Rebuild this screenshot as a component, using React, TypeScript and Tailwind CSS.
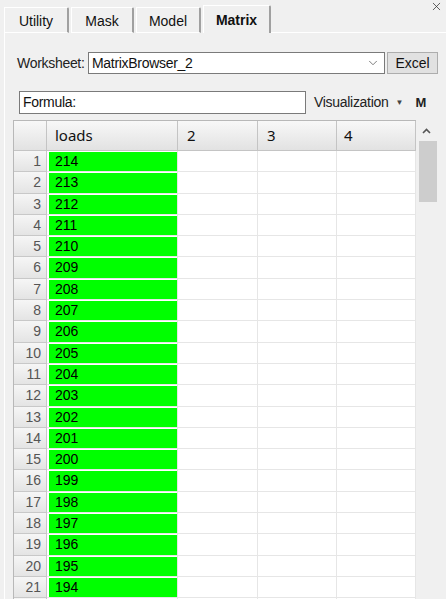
import { ChevronDown, X } from 'lucide-react'

const loads = [214, 213, 212, 211, 210, 209, 208, 207, 206, 205, 204, 203, 202, 201, 200, 199, 198, 197, 196, 195, 194]

function Tab({ label, w, active }: { label: string; w: string; active?: boolean }) {
  return (
    <div
      className={`${w} ${active ? 'h-[28px] font-bold bg-[#f0f0f0] border-b-0' : 'h-[26px] border-b border-b-[#ffffff]'} flex items-center justify-center pt-[2px] border-l border-t border-l-[#ffffff] border-t-[#ffffff] border-r-2 border-r-[#a0a0a0] rounded-tr-[2px] text-[14px] text-[#111]`}>
      {label}
    </div>
  )
}

function App() {
  return (
    <div
      className="w-[446px] h-[599px] bg-[#f0f0f0] overflow-hidden relative text-[13px] text-[#111]"
      style={{ fontFamily: '"Liberation Sans", Arial, sans-serif' }}>
      <X className="absolute right-[3px] top-[0px] w-[13px] h-[13px] text-[#333]" strokeWidth={1.4} />

      {/* tabs */}
      <div className="flex items-end h-[33px] pl-[4px]">
        <div className="flex items-end gap-[2px]">
          <Tab label="Utility" w="w-[65px]" />
          <Tab label="Mask" w="w-[63px]" />
          <Tab label="Model" w="w-[65px]" />
          <Tab label="Matrix" w="w-[68px]" active />
        </div>
        <div className="flex-1 h-[1px] bg-[#ffffff] mb-0" />
      </div>

      <div className="ml-[4px] border-l border-[#ffffff] h-[566px] flex flex-col">
        {/* worksheet row */}
        <div className="flex items-center mt-[19px] h-[22px]">
          <span className="ml-[12px] w-[70px] text-[14px] text-[#222] tracking-[-0.3px]">Worksheet:</span>
          <div className="ml-[1px] w-[297px] h-[22px] bg-white border border-[#7a7a7a] flex items-center pl-[3px] pr-[4px]">
            <span className="flex-1 text-[14px] tracking-[-0.3px]">MatrixBrowser_2</span>
            <ChevronDown className="w-[14px] h-[14px] text-[#555]" strokeWidth={1.3} />
          </div>
          <div className="ml-[2px] w-[51px] h-[22px] bg-[#e1e1e1] border border-[#adadad] flex items-center justify-center text-[14px]">
            Excel
          </div>
        </div>

        {/* formula row */}
        <div className="flex items-center mt-[17px] h-[23px]">
          <div className="ml-[14px] w-[287px] h-[23px] bg-white border border-[#7a7a7a] flex items-center pl-[3px] text-[14px] tracking-[-0.3px]">
            Formula:
          </div>
          <span className="ml-[8px] text-[14px] text-[#222] tracking-[-0.3px]">Visualization</span>
          <span className="ml-[7px] text-[8px] text-[#444]">▼</span>
          <span className="ml-[12px] text-[13px] font-bold text-[#222]">M</span>
        </div>

        {/* grid */}
        <div className="flex mt-[6px] ml-[8px]">
          <div className="w-[403px] border-l border-t border-[#b8b8b8] bg-white">
            <div className="flex h-[30px] text-[15px]" style={{ fontFamily: '"Noto Sans", sans-serif' }}>
              <div className="w-[33px] border-r border-b border-[#c4c4c4] bg-gradient-to-b from-[#f8f8f8] to-[#e2e2e2]" />
              <div className="w-[131px] border-r border-b border-[#c4c4c4] bg-gradient-to-b from-[#f8f8f8] to-[#e2e2e2] pl-[8px] flex items-center">loads</div>
              <div className="w-[80px] border-r border-b border-[#c4c4c4] bg-gradient-to-b from-[#f8f8f8] to-[#e2e2e2] pl-[9px] flex items-center">2</div>
              <div className="w-[79px] border-r border-b border-[#c4c4c4] bg-gradient-to-b from-[#f8f8f8] to-[#e2e2e2] pl-[9px] flex items-center">3</div>
              <div className="w-[79px] border-r border-b border-[#c4c4c4] bg-gradient-to-b from-[#f8f8f8] to-[#e2e2e2] pl-[7px] flex items-center">4</div>
            </div>
            {loads.map((v, i) => (
              <div key={i} className="flex h-[21.3px] text-[14px]">
                <div className="w-[33px] border-r border-b border-[#c8c8c8] bg-gradient-to-b from-[#f6f6f6] to-[#e4e4e4] text-right pr-[5px] text-[#555] leading-[20px]">
                  {i + 1}
                </div>
                <div className="w-[131px] border-r border-b border-[#e6e6e6] pl-[2px] pt-[1px] pb-0">
                  <div className="h-full bg-[#00ff00] pl-[6px] leading-[19px] text-black">{v}</div>
                </div>
                <div className="w-[80px] border-r border-b border-[#e6e6e6]" />
                <div className="w-[79px] border-r border-b border-[#e6e6e6]" />
                <div className="w-[79px] border-r border-b border-[#e6e6e6]" />
              </div>
            ))}
            <div className="flex h-[8px]">
              <div className="w-[33px] border-r border-[#c8c8c8] bg-gradient-to-b from-[#f6f6f6] to-[#e4e4e4]" />
              <div className="w-[131px] border-r border-[#e6e6e6] pl-[2px] pt-[1px]">
                <div className="h-full bg-[#00ff00]" />
              </div>
              <div className="w-[80px] border-r border-[#e6e6e6]" />
              <div className="w-[79px] border-r border-[#e6e6e6]" />
              <div className="w-[79px] border-r border-[#e6e6e6]" />
            </div>
          </div>

          {/* scrollbar */}
          <div className="w-[21px] flex flex-col items-center">
            <svg width="9" height="6" viewBox="0 0 9 6" className="mt-[8px]">
              <path d="M1 5 L4.5 1.5 L8 5" stroke="#555" strokeWidth="1.6" fill="none" />
            </svg>
            <div className="mt-[7px] ml-[3px] w-[18px] h-[61px] bg-[#cdcdcd]" />
          </div>
        </div>
      </div>
    </div>
  )
}

export default App
